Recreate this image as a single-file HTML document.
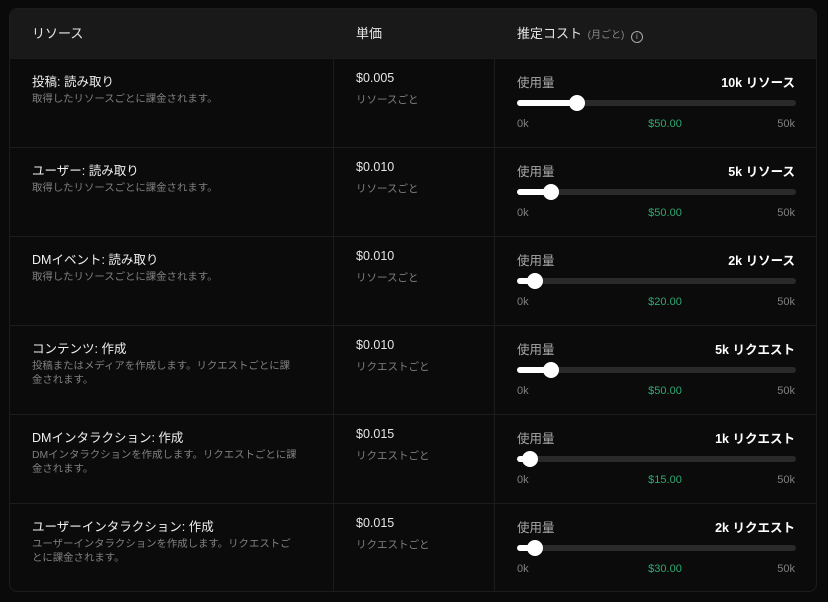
<!DOCTYPE html><html><head><meta charset="utf-8"><style>
*{margin:0;padding:0;box-sizing:border-box}
body{width:828px;height:602px;background:#0a0a0a;font-family:"Liberation Sans","Noto Sans CJK JP",sans-serif;color:#e8e8e8;position:relative;overflow:hidden}
.card{position:absolute;left:9px;top:8px;width:808px;height:584px;background:#0b0b0b;border:1px solid #1c1c1c;border-radius:8px;overflow:hidden}
.hdr{position:absolute;left:0;top:0;width:100%;height:49px;background:#191919}
.h{position:absolute;top:14px;font-size:13px;color:#e6e6e6}
.row{position:absolute;left:0;width:100%;height:89px;border-top:1px solid #1c1c1c}
.vl{position:absolute;top:49px;bottom:0;width:1px;background:#1c1c1c}
.t{position:absolute;left:22px;top:12px;font-size:12.5px;color:#f0f0f0}
.s{position:absolute;left:22px;top:34px;font-size:10.4px;line-height:14px;color:#808080;width:282px}
.p{position:absolute;left:346px;top:12px;font-size:12.5px;color:#e6e6e6}
.ps{position:absolute;left:346px;top:33px;font-size:10.5px;color:#808080}
.u{position:absolute;left:507px;top:13px;font-size:12.5px;color:#a8a8a8}
.v{position:absolute;right:21px;top:13px;font-size:12.5px;color:#fff;font-weight:bold}
.tr{position:absolute;left:507px;top:41px;width:279px;height:6px;border-radius:3px;background:#2a2a2a}
.fl{position:absolute;left:0;top:0;height:6px;border-radius:3px;background:#fff}
.th{position:absolute;top:-5px;width:16px;height:16px;border-radius:50%;background:#fff}
.l0{position:absolute;left:507px;top:59px;font-size:11px;color:#808080}
.lm{position:absolute;left:620px;width:70px;text-align:center;top:59px;font-size:11px;color:#2fa872}
.l5{position:absolute;right:21px;top:59px;font-size:11px;color:#808080}
</style></head><body><div class="card">
<div class="hdr"></div>
<div class="h" style="left:22px">リソース</div>
<div class="h" style="left:346px">単価</div>
<div class="h" style="left:507px">推定コスト <span style="font-size:10px;color:#888;margin-left:2px">(月ごと)</span> <span style="display:inline-block;width:12px;height:12px;border:1.2px solid #aaa;border-radius:50%;font-size:8px;text-align:center;line-height:10px;color:#aaa;vertical-align:-1px;margin-left:3px">i</span></div>

<div class="row" style="top:49px"><div class="t">投稿: 読み取り</div><div class="s">取得したリソースごとに課金されます。</div><div class="p">$0.005</div><div class="ps">リソースごと</div><div class="u">使用量</div><div class="v">10k リソース</div><div class="tr"><div class="fl" style="width:60px"></div><div class="th" style="left:52px"></div></div><div class="l0">0k</div><div class="lm">$50.00</div><div class="l5">50k</div></div>

<div class="row" style="top:138px"><div class="t">ユーザー: 読み取り</div><div class="s">取得したリソースごとに課金されます。</div><div class="p">$0.010</div><div class="ps">リソースごと</div><div class="u">使用量</div><div class="v">5k リソース</div><div class="tr"><div class="fl" style="width:34px"></div><div class="th" style="left:26px"></div></div><div class="l0">0k</div><div class="lm">$50.00</div><div class="l5">50k</div></div>

<div class="row" style="top:227px"><div class="t">DMイベント: 読み取り</div><div class="s">取得したリソースごとに課金されます。</div><div class="p">$0.010</div><div class="ps">リソースごと</div><div class="u">使用量</div><div class="v">2k リソース</div><div class="tr"><div class="fl" style="width:18px"></div><div class="th" style="left:10px"></div></div><div class="l0">0k</div><div class="lm">$20.00</div><div class="l5">50k</div></div>

<div class="row" style="top:316px"><div class="t">コンテンツ: 作成</div><div class="s">投稿またはメディアを作成します。リクエストごとに課<br>金されます。</div><div class="p">$0.010</div><div class="ps">リクエストごと</div><div class="u">使用量</div><div class="v">5k リクエスト</div><div class="tr"><div class="fl" style="width:34px"></div><div class="th" style="left:26px"></div></div><div class="l0">0k</div><div class="lm">$50.00</div><div class="l5">50k</div></div>

<div class="row" style="top:405px"><div class="t">DMインタラクション: 作成</div><div class="s">DMインタラクションを作成します。リクエストごとに課<br>金されます。</div><div class="p">$0.015</div><div class="ps">リクエストごと</div><div class="u">使用量</div><div class="v">1k リクエスト</div><div class="tr"><div class="fl" style="width:13px"></div><div class="th" style="left:5px"></div></div><div class="l0">0k</div><div class="lm">$15.00</div><div class="l5">50k</div></div>

<div class="row" style="top:494px"><div class="t">ユーザーインタラクション: 作成</div><div class="s">ユーザーインタラクションを作成します。リクエストご<br>とに課金されます。</div><div class="p">$0.015</div><div class="ps">リクエストごと</div><div class="u">使用量</div><div class="v">2k リクエスト</div><div class="tr"><div class="fl" style="width:18px"></div><div class="th" style="left:10px"></div></div><div class="l0">0k</div><div class="lm">$30.00</div><div class="l5">50k</div></div>

<div class="vl" style="left:323px"></div><div class="vl" style="left:484px"></div>
</div></body></html>
